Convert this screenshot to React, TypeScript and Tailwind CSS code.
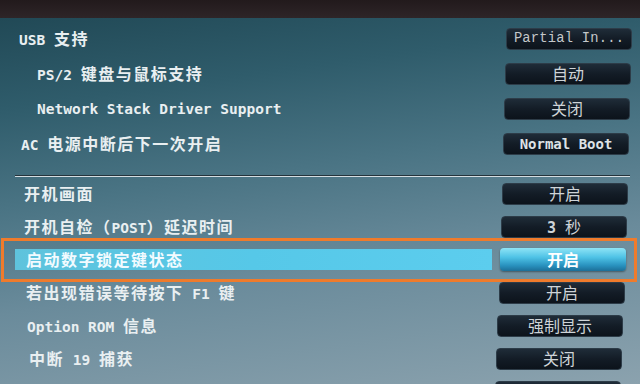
import React from 'react';

type Row = {
  label: string;
  pl: string;
  pr: string;
  value: string;
  kind?: 'serif' | 'bold';
  active?: boolean;
};

const topRows: Row[] = [
  { label: 'USB 支持', pl: 'pl-[19px]', pr: 'pr-[8px]', value: 'Partial In...', kind: 'serif' },
  { label: 'PS/2 键盘与鼠标支持', pl: 'pl-[37px]', pr: 'pr-[9px]', value: '自动' },
  { label: 'Network Stack Driver Support', pl: 'pl-[37px]', pr: 'pr-[10px]', value: '关闭' },
  { label: 'AC 电源中断后下一次开启', pl: 'pl-[21px]', pr: 'pr-[11px]', value: 'Normal Boot', kind: 'bold' },
];

const bottomRows: Row[] = [
  { label: '开机画面', pl: 'pl-[24px]', pr: 'pr-[12px]', value: '开启' },
  { label: '开机自检（POST）延迟时间', pl: 'pl-[24px]', pr: 'pr-[13px]', value: '3 秒' },
  { label: '启动数字锁定键状态', pl: 'pl-[15px]', pr: 'pr-[14px]', value: '开启', active: true },
  { label: '若出现错误等待按下 F1 键', pl: 'pl-[26px]', pr: 'pr-[15px]', value: '开启' },
  { label: 'Option ROM 信息', pl: 'pl-[27px]', pr: 'pr-[17px]', value: '强制显示' },
  { label: '中断 19 捕获', pl: 'pl-[29px]', pr: 'pr-[18px]', value: '关闭' },
  { label: '', pl: 'pl-[29px]', pr: 'pr-[19px]', value: '' },
];

const CJK = /([\u3000-\u9fff\uff00-\uffef]+)/;

// split into latin / cjk runs so each script gets its own size
const Txt: React.FC<{ text: string; latin: string; cjk: string }> = ({ text, latin, cjk }) => (
  <span className="whitespace-pre leading-none">
    {text.split(CJK).filter(Boolean).map((part, i) =>
      CJK.test(part) ? (
        <span key={i} className={cjk}>{part}</span>
      ) : (
        <span key={i} className={latin}>{part}</span>
      )
    )}
  </span>
);

const labelLatin = "font-['DejaVu_Sans_Mono',monospace] text-[14.5px] font-bold";
const labelCjk = "font-['Noto_Sans_CJK_SC',sans-serif] text-[16px] font-bold tracking-[1.5px]";

const Value: React.FC<{ row: Row }> = ({ row }) => {
  if (row.active) {
    return (
      <div className="w-[126px] h-[23px] rounded-[4px] bg-[linear-gradient(180deg,#8ee4f6_0%,#4fc3e6_40%,#2a93c0_75%,#1c6f98_100%)] shadow-[0_1px_2px_rgba(0,0,0,0.4)] flex justify-center items-center text-white">
        <Txt text={row.value} latin={labelLatin} cjk="font-['Noto_Sans_CJK_SC',sans-serif] text-[16px] font-bold" />
      </div>
    );
  }
  return (
    <div className="w-[126px] h-[22px] rounded-[4px] bg-[linear-gradient(180deg,#1f2c38_0%,#131c26_50%,#0c131b_100%)] border border-[#2d3c48] flex justify-center items-center text-[#cfd4d8]">
      {row.kind === 'serif' ? (
        <span className="font-['Liberation_Mono',monospace] text-[13.8px] leading-none text-[#c4c8ca] tracking-[0.2px]">{row.value}</span>
      ) : row.kind === 'bold' ? (
        <span className="font-['DejaVu_Sans_Mono',monospace] text-[14px] leading-none font-bold text-[#dde2e6]">{row.value}</span>
      ) : (
        <Txt
          text={row.value}
          latin="font-['DejaVu_Sans_Mono',monospace] text-[15px] font-bold"
          cjk="font-['Noto_Sans_CJK_SC',sans-serif] text-[16px]"
        />
      )}
    </div>
  );
};

const SettingRow: React.FC<{ row: Row; h: string }> = ({ row, h }) => (
  <div className={`${h} ${row.pl} ${row.pr} flex items-center`}>
    {row.active ? (
      <div className="flex-1 h-[21px] mr-[8px] pl-[11px] bg-[linear-gradient(90deg,#5fc3dc_0%,#56c8e8_50%,#5ccdee_100%)] flex items-center text-[#f2fbff]">
        <Txt text={row.label} latin={labelLatin} cjk={labelCjk} />
      </div>
    ) : (
      <div className="flex-1 flex items-center text-[#e9eff1]">
        <Txt text={row.label} latin={labelLatin} cjk={labelCjk} />
      </div>
    )}
    <Value row={row} />
  </div>
);

export default function App() {
  return (
    <div className="w-[640px] h-[384px] relative overflow-hidden bg-[#2a2224]">
      {/* dark strip above panel */}
      <div className="h-[18px] bg-[linear-gradient(180deg,#221a1c_0%,#2e2528_100%)]" />

      <div className="h-[366px] pt-[3px] bg-[linear-gradient(172deg,#214956_0%,#2f5c6b_20%,#4a7484_42%,#6a8b9b_65%,#8ba2ae_100%)]">
        {topRows.map((row, i) => (
          <SettingRow key={i} row={row} h="h-[35px]" />
        ))}

        <div className="h-[14px]" />
        <div className="ml-[15px] mr-[10px] border-t border-[#25343c] h-[2px] bg-[#d5dde1]" />

        {bottomRows.map((row, i) => (
          <SettingRow key={i} row={row} h="h-[33px]" />
        ))}
      </div>

      {/* orange selection frame */}
      <div className="absolute left-[1px] top-[238px] w-[636px] h-[44px] border-[3px] border-[#ef7b2c] pointer-events-none" />
    </div>
  );
}
